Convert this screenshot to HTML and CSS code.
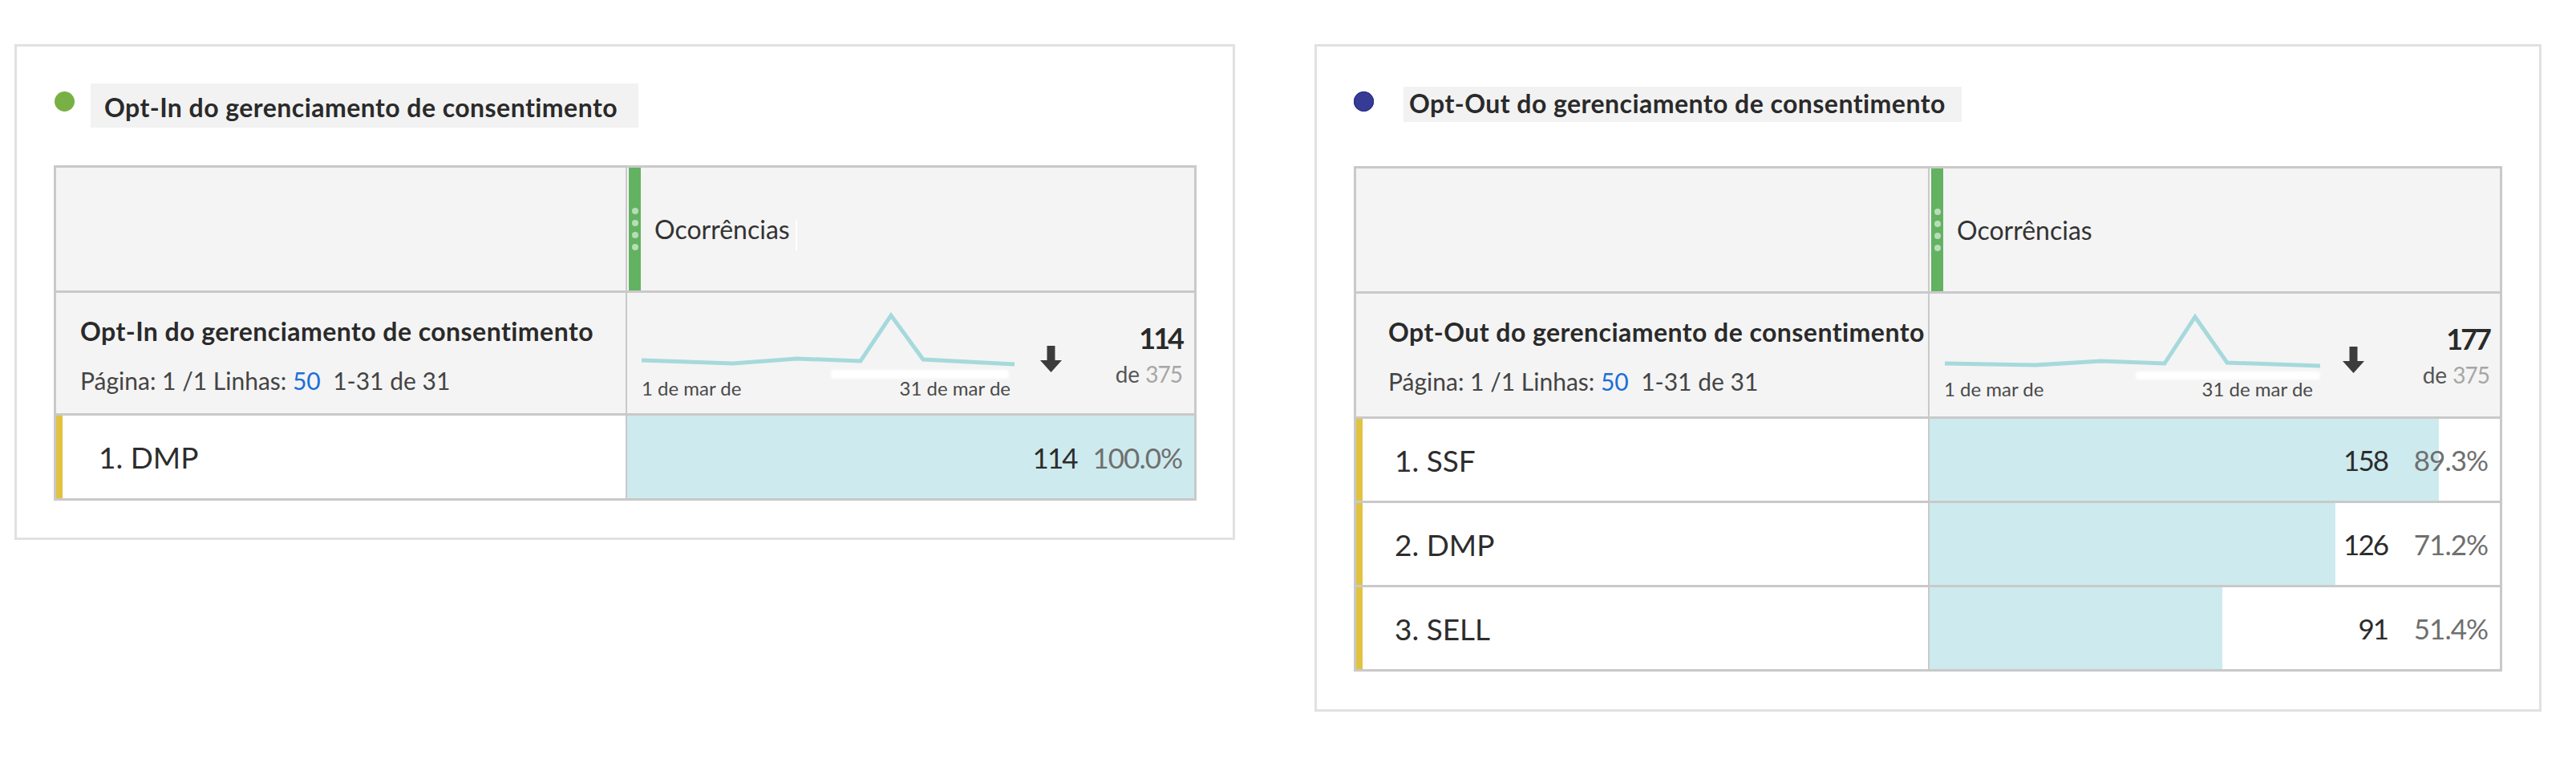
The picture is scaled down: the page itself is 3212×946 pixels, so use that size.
FILE: index.html
```html
<!DOCTYPE html>
<html lang="pt">
<head>
<meta charset="utf-8">
<title>Gerenciamento de consentimento</title>
<link rel="stylesheet" href="styles.css">
</head>
<body>
<div class="page">
  <section class="panel panel-in">
    <div class="title-row">
      <span class="dot dot-green"></span>
      <h2 class="title">Opt-In do gerenciamento de consentimento</h2>
    </div>
    <div class="ftable">
      <div class="row head-row">
        <div class="cell dim-head"></div>
        <div class="cell metric-head">
          <span class="grip"><i></i><i></i><i></i><i></i></span>
          <span class="metric-name">Ocorrências</span>
          <span class="tick"></span>
        </div>
      </div>
      <div class="row sum-row">
        <div class="cell dim-sum">
          <div class="sum-title">Opt-In do gerenciamento de consentimento</div>
          <div class="pager">Página: 1 /1 Linhas: <span class="link">50</span>&nbsp; 1-31 de 31</div>
        </div>
        <div class="cell metric-sum">
          <div class="spark">
            <svg class="spark-svg" width="470" height="88" viewBox="0 0 470 88">
              <defs><filter id="b1" x="-10%" y="-100%" width="120%" height="300%"><feGaussianBlur stdDeviation="1.6"/></filter></defs>
              <polyline points="0,64 114,68 194,62 273,65 311,8 351,63 465,69" fill="none" stroke="#a6d9dc" stroke-width="5" stroke-linejoin="miter"/>
              <rect x="236" y="76" width="222" height="11" rx="4" fill="#ffffff" filter="url(#b1)"/>
            </svg>
            <div class="spark-labels"><span>1 de mar de</span><span>31 de mar de</span></div>
          </div>
          <svg class="arrow" width="27" height="33" viewBox="0 0 27 33"><path d="M8.5 0H18.5V18H27L13.5 33L0 18H8.5Z" fill="#3c3c3c"/></svg>
          <div class="totals">
            <div class="total">114</div>
            <div class="of">de <span>375</span></div>
          </div>
        </div>
      </div>
      <div class="row data-row">
        <div class="cell dim">1. DMP</div>
        <div class="cell val" style="--w:100%"><span class="num">114</span><span class="pct">100.0%</span></div>
      </div>
    </div>
  </section>

  <section class="panel panel-out">
    <div class="title-row">
      <span class="dot dot-blue"></span>
      <h2 class="title">Opt-Out do gerenciamento de consentimento</h2>
    </div>
    <div class="ftable">
      <div class="row head-row">
        <div class="cell dim-head"></div>
        <div class="cell metric-head">
          <span class="grip"><i></i><i></i><i></i><i></i></span>
          <span class="metric-name">Ocorrências</span>
        </div>
      </div>
      <div class="row sum-row">
        <div class="cell dim-sum">
          <div class="sum-title">Opt-Out do gerenciamento de consentimento</div>
          <div class="pager">Página: 1 /1 Linhas: <span class="link">50</span>&nbsp; 1-31 de 31</div>
        </div>
        <div class="cell metric-sum">
          <div class="spark">
            <svg class="spark-svg" width="470" height="88" viewBox="0 0 470 88">
              <defs><filter id="b2" x="-10%" y="-100%" width="120%" height="300%"><feGaussianBlur stdDeviation="1.6"/></filter></defs>
              <polyline points="1,67 114,69 196,64 275,67 313,9 353,66 469,70" fill="none" stroke="#a6d9dc" stroke-width="5" stroke-linejoin="miter"/>
              <rect x="239" y="77" width="230" height="10" rx="4" fill="#ffffff" filter="url(#b2)"/>
            </svg>
            <div class="spark-labels"><span>1 de mar de</span><span>31 de mar de</span></div>
          </div>
          <svg class="arrow" width="27" height="33" viewBox="0 0 27 33"><path d="M8.5 0H18.5V18H27L13.5 33L0 18H8.5Z" fill="#3c3c3c"/></svg>
          <div class="totals">
            <div class="total">177</div>
            <div class="of">de <span>375</span></div>
          </div>
        </div>
      </div>
      <div class="row data-row">
        <div class="cell dim">1. SSF</div>
        <div class="cell val" style="--w:89.3%"><span class="num">158</span><span class="pct">89.3%</span></div>
      </div>
      <div class="row data-row">
        <div class="cell dim">2. DMP</div>
        <div class="cell val" style="--w:71.2%"><span class="num">126</span><span class="pct">71.2%</span></div>
      </div>
      <div class="row data-row">
        <div class="cell dim">3. SELL</div>
        <div class="cell val" style="--w:51.4%"><span class="num">91</span><span class="pct">51.4%</span></div>
      </div>
    </div>
  </section>
</div>
</body>
</html>
```

FILE: styles.css
```css
* { box-sizing: border-box; }

body {
  margin: 0;
  background: #ffffff;
  font-family: Lato, "Noto Sans", sans-serif;
  color: #2c2c2c;
}

.page {
  display: flex;
  align-items: flex-start;
  gap: 99px;
  padding: 55px 0 0 18px;
}

.panel {
  border: 3px solid #e1e1e1;
  background: #ffffff;
}

.panel-in {
  width: 1522px;
  height: 618px;
  padding: 46px 0 0 46px;
}

.panel-out {
  width: 1530px;
  height: 832px;
  padding: 50px 0 0 46px;
}

/* title row */
.title-row {
  display: flex;
  align-items: flex-start;
}

.dot {
  width: 25px;
  height: 25px;
  border-radius: 50%;
  flex: none;
}

.dot-green {
  background: #79b046;
  margin: 10px 20px 0 1px;
}

.dot-blue {
  background: #363b95;
  box-shadow: inset 0 0 0 1px #262a80;
  margin: 6px 37px 0 0;
}

.title {
  margin: 0;
  background: #f2f2f2;
  font-size: 32px;
  font-weight: 700;
  letter-spacing: 0.45px;
  line-height: 36px;
  color: #2a2a2a;
  white-space: nowrap;
}

.panel-in .title {
  width: 683px;
  height: 55px;
  padding: 12px 0 0 17px;
}

.panel-out .title {
  width: 696px;
  height: 44px;
  padding: 3px 0 0 7px;
}

.panel-in .title-row { margin-bottom: 47px; }
.panel-out .title-row { margin-bottom: 55px; }

/* freeform table */
.ftable {
  border: 3px solid #c9c9c9;
  display: flex;
  flex-direction: column;
}

.panel-in .ftable { width: 1425px; }
.panel-out .ftable { width: 1432px; }

.row {
  display: flex;
}

.row + .row {
  border-top: 3px solid #c9c9c9;
}

.cell {
  flex: none;
}

.panel-in .cell:first-child { width: 712px; }
.panel-out .cell:first-child { width: 715px; }

.cell:first-child {
  border-right: 2px solid #c9c9c9;
}

.cell:last-child {
  flex: 1;
}

/* header row */
.head-row {
  height: 153px;
  background: #f4f4f4;
}

.metric-head {
  display: flex;
  align-items: stretch;
}

.grip {
  width: 15px;
  margin-left: 2px;
  background: #62b262;
  display: flex;
  flex-direction: column;
  align-items: center;
  justify-content: center;
  gap: 7px;
}

.grip i {
  display: block;
  width: 8px;
  height: 8px;
  border-radius: 50%;
  background: #b7ddb6;
}

.metric-name {
  align-self: center;
  margin-left: 17px;
  font-size: 32px;
  line-height: 36px;
  color: #333333;
}

.tick {
  align-self: center;
  width: 2px;
  height: 38px;
  margin: 14px 0 0 7px;
  background: #ffffff;
}

/* summary row (heights include the 3px top border) */
.sum-row {
  background: #f4f4f4;
}

.panel-in .sum-row { height: 153px; }
.panel-out .sum-row { height: 156px; }

.dim-sum {
  padding-top: 30px;
}

.panel-in .dim-sum { padding-left: 30px; }
.panel-out .dim-sum { padding-left: 40px; }

.sum-title {
  font-size: 32px;
  font-weight: 700;
  letter-spacing: 0.45px;
  line-height: 36px;
  color: #2a2a2a;
  white-space: nowrap;
}

.pager {
  margin-top: 26px;
  font-size: 30px;
  line-height: 34px;
  color: #444444;
  white-space: nowrap;
}

.link {
  color: #1b6fd8;
}

.metric-sum {
  display: flex;
  align-items: flex-start;
  padding-left: 18px;
}

.spark {
  width: 470px;
  margin-top: 20px;
  flex: none;
}

.spark-svg {
  display: block;
}

.spark-labels {
  display: flex;
  justify-content: space-between;
  margin-top: -3px;
  padding-right: 10px;
  font-size: 24px;
  line-height: 28px;
  color: #4a4a4a;
  white-space: nowrap;
}

.arrow {
  flex: none;
  margin: 66px 0 0 27px;
}

.totals {
  margin-left: auto;
  margin-top: 36px;
  text-align: right;
}

.panel-in .totals { padding-right: 15px; }
.panel-out .totals { padding-right: 13px; }

.total {
  font-size: 36px;
  font-weight: 700;
  line-height: 40px;
  letter-spacing: -3px;
  color: #2a2a2a;
}

.of {
  margin-top: 8px;
  font-size: 28px;
  line-height: 34px;
  color: #555555;
}

.of span {
  color: #a6a6a6;
  letter-spacing: -1px;
}

/* data rows (heights include the 3px top border) */
.panel-in .data-row { height: 106px; }
.panel-out .data-row { height: 105px; }

.dim {
  display: flex;
  align-items: center;
  border-left: 8px solid #e1c33f;
  font-size: 37px;
  color: #2d2d2d;
  white-space: nowrap;
}

.panel-in .dim { padding-left: 45px; }
.panel-out .dim { padding-left: 40px; }

.val {
  display: flex;
  align-items: center;
  justify-content: flex-end;
  padding-right: 15px;
  background: linear-gradient(#cdeaee, #cdeaee) no-repeat;
  background-size: var(--w) 100%;
  font-size: 35px;
}

.num {
  color: #2c2c2c;
  letter-spacing: -2px;
}

.pct {
  min-width: 105px;
  margin-left: 20px;
  text-align: right;
  color: #6f6f6f;
  letter-spacing: -1px;
}
```
